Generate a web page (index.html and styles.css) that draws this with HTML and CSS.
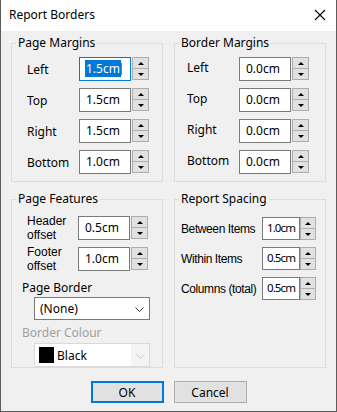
FILE: index.html
```html
<!DOCTYPE html>
<html lang="en">
<head>
    <meta charset="UTF-8">
    <title>Report Borders</title>
    <link rel="stylesheet" href="styles.css">
</head>
<body>
<div class="window">
    <div class="titlebar">
        <span class="title">Report Borders</span>
        <span class="close">
            <svg width="12" height="12" viewBox="0 0 12 12"><path d="M1 1L11 11M11 1L1 11" stroke="#000" stroke-width="1.1" fill="none"/></svg>
        </span>
    </div>
    <div class="client">
        <div class="groups">
            <fieldset class="group page-margins">
                <legend>Page Margins</legend>
                <div class="row"><span class="lbl">Left</span><div class="edit focus"><span class="sel">1.5cm</span><span class="caret"></span></div><div class="spin"><span class="up"></span><span class="down"></span></div></div>
                <div class="row"><span class="lbl">Top</span><div class="edit">1.5cm</div><div class="spin"><span class="up"></span><span class="down"></span></div></div>
                <div class="row"><span class="lbl">Right</span><div class="edit">1.5cm</div><div class="spin"><span class="up"></span><span class="down"></span></div></div>
                <div class="row"><span class="lbl">Bottom</span><div class="edit">1.0cm</div><div class="spin"><span class="up"></span><span class="down"></span></div></div>
            </fieldset>
            <fieldset class="group border-margins">
                <legend>Border Margins</legend>
                <div class="row"><span class="lbl">Left</span><div class="edit">0.0cm</div><div class="spin"><span class="up"></span><span class="down"></span></div></div>
                <div class="row"><span class="lbl">Top</span><div class="edit">0.0cm</div><div class="spin"><span class="up"></span><span class="down"></span></div></div>
                <div class="row"><span class="lbl">Right</span><div class="edit">0.0cm</div><div class="spin"><span class="up"></span><span class="down"></span></div></div>
                <div class="row"><span class="lbl">Bottom</span><div class="edit">0.0cm</div><div class="spin"><span class="up"></span><span class="down"></span></div></div>
            </fieldset>
            <fieldset class="group page-features">
                <legend>Page Features</legend>
                <div class="row"><span class="lbl two">Header<br>offset</span><div class="edit">0.5cm</div><div class="spin"><span class="up"></span><span class="down"></span></div></div>
                <div class="row"><span class="lbl two">Footer<br>offset</span><div class="edit">1.0cm</div><div class="spin"><span class="up"></span><span class="down"></span></div></div>
                <div class="caption">Page Border</div>
                <div class="combo">
                    <span class="combo-text">(None)</span>
                    <svg class="chev" width="9" height="5" viewBox="0 0 9 5"><path d="M0.5 0.5L4.5 4.5L8.5 0.5" stroke="#333" fill="none"/></svg>
                </div>
                <div class="caption disabled">Border Colour</div>
                <div class="combo disabled">
                    <span class="combo-text"><span class="swatch"></span>Black</span>
                    <svg class="chev" width="9" height="5" viewBox="0 0 9 5"><path d="M0.5 0.5L4.5 4.5L8.5 0.5" stroke="#c4c4c4" fill="none"/></svg>
                </div>
            </fieldset>
            <fieldset class="group report-spacing">
                <legend>Report Spacing</legend>
                <div class="row"><span class="lbl">Between Items</span><div class="edit">1.0cm</div><div class="spin"><span class="up"></span><span class="down"></span></div></div>
                <div class="row"><span class="lbl">Within Items</span><div class="edit">0.5cm</div><div class="spin"><span class="up"></span><span class="down"></span></div></div>
                <div class="row"><span class="lbl">Columns (total)</span><div class="edit">0.5cm</div><div class="spin"><span class="up"></span><span class="down"></span></div></div>
            </fieldset>
        </div>
        <div class="buttons">
            <button class="btn default">OK</button>
            <button class="btn">Cancel</button>
        </div>
    </div>
</div>
</body>
</html>
```

FILE: styles.css
```css
html, body { margin: 0; padding: 0; }
body { font-family: "Noto Sans", "DejaVu Sans", sans-serif; font-size: 12px; color: #000; background: #fff; }

.window { width: 337px; height: 412px; box-sizing: border-box; border: 1px solid #5c5c5c; border-top: none; background: #f0f0f0; display: flex; flex-direction: column; }

.titlebar { height: 31px; background: #fff; display: flex; align-items: center; justify-content: space-between; padding: 0 9px 0 8px; }
.title { font-size: 12px; line-height: 14px; margin-top: -1px; }
.close { width: 12px; height: 12px; display: flex; margin-right: 1px; margin-top: -2px; }

.client { flex: 1; padding: 5px 10px 0; }
.groups { display: grid; grid-template-columns: 152px 152px; grid-template-rows: 146px 176px; column-gap: 11px; row-gap: 10px; }

.group { margin: 0; min-width: 0; border: 1px solid #dcdcdc; padding: 0; display: flex; flex-direction: column; }
.group legend { margin-left: 4px; padding: 0 2px; line-height: 14px; }

.row { display: flex; align-items: center; height: 24px; }
.lbl { flex: none; white-space: nowrap; }
.page-margins .row, .border-margins .row { margin-top: 7px; }
.page-margins .row { padding-left: 15px; }
.page-margins .lbl { width: 52px; }
.border-margins .row { padding-left: 12px; }
.border-margins .lbl { width: 52px; padding-bottom: 3px; }

.edit { box-sizing: border-box; width: 52px; height: 24px; border: 1px solid #7a7a7a; background: #fff; padding-left: 6px; line-height: 21px; white-space: nowrap; }
.edit.focus { border-color: #0078d7; padding-left: 5px; }
.sel { background: #0078d7; color: #fff; padding: 0 1px; }
.caret { display: inline-block; width: 1px; height: 12px; background: #e06a00; vertical-align: -2px; }

.spin { box-sizing: border-box; width: 17px; height: 23px; margin-left: 1px; border: 1px solid #adadad; background: #e1e1e1; display: flex; flex-direction: column; align-self: flex-start; }
.spin span { flex: 1; display: flex; align-items: center; justify-content: center; }
.spin .down { border-top: 1px solid #adadad; }
.spin .up::after { content: ""; border-left: 3px solid transparent; border-right: 3px solid transparent; border-bottom: 3px solid #000; }
.spin .down::after { content: ""; border-left: 3px solid transparent; border-right: 3px solid transparent; border-top: 3px solid #000; }

.page-features .row { padding-left: 15px; }
.page-features .row:first-of-type { margin-top: 10px; }
.page-features .row + .row { margin-top: 7px; }
.page-features .lbl { width: 51px; font-family: "Liberation Sans", Arial, sans-serif; font-size: 12px; line-height: 14px; }

.caption { margin: 10px 0 0 10px; line-height: 14px; }
.caption.disabled { color: #a0a0a0; margin-top: 6px; }

.combo { box-sizing: border-box; width: 116px; height: 25px; margin: 2px 0 0 22px; border: 1px solid #7a7a7a; background: #fff; display: flex; align-items: center; justify-content: space-between; padding: 0 5px; }
.combo-text { display: flex; align-items: center; }
.combo.disabled { height: 24px; margin-top: 3px; border-color: #d9d9d9; background: #f4f4f4; padding: 0 4px 0 0; }
.combo.disabled .combo-text { background: #fff; height: 22px; width: 96px; padding-left: 4px; box-sizing: border-box; }
.swatch { width: 15px; height: 16px; background: #000; margin-right: 3px; }
.chev { margin-top: 2px; }

.report-spacing .row { padding-left: 6px; height: 23px; margin-top: 7px; }
.report-spacing .row:first-of-type { margin-top: 11px; }
.report-spacing .lbl { width: 81px; font-family: "Liberation Sans", Arial, sans-serif; font-size: 12px; letter-spacing: -0.4px; }
.report-spacing .edit { width: 38px; height: 23px; padding-left: 4px; line-height: 20px; letter-spacing: -0.9px; font-size: 11.5px; }
.report-spacing .spin { width: 16px; margin-left: 0; }

.buttons { display: flex; justify-content: center; gap: 10px; margin-top: 13px; }
.btn { box-sizing: border-box; width: 73px; height: 22px; border: 1px solid #adadad; background: #e1e1e1; font: inherit; color: #000; padding: 0; margin: 0; }
.btn.default { border: 2px solid #0078d7; }
```
